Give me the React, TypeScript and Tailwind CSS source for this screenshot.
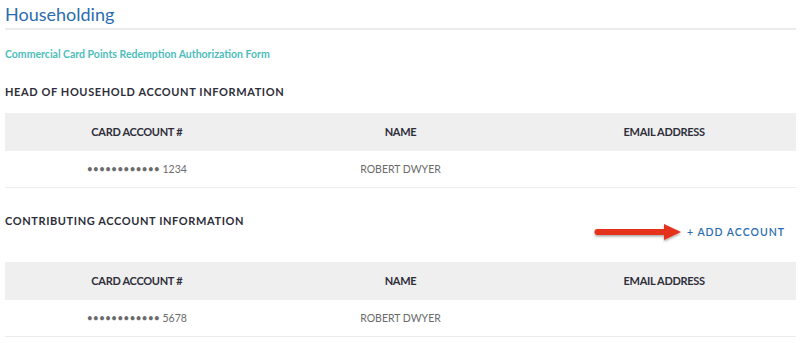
import React from 'react';

type Row = { card: string; name: string; email: string };

const Arrow: React.FC = () => (
  <svg width="92" height="22" viewBox="0 0 92 22" className="block">
    <defs>
      <filter id="sh" x="-10%" y="-40%" width="120%" height="180%">
        <feDropShadow dx="0" dy="1.5" stdDeviation="1.2" floodColor="#000" floodOpacity="0.35" />
      </filter>
    </defs>
    <path
      d="M4.5 7 L71 7 L71 2 L88 10 L71 18 L71 13 L4.5 13 Q1.5 13 1.5 10 Q1.5 7 4.5 7 Z"
      fill="#e5321b"
      filter="url(#sh)"
    />
  </svg>
);

const AccountTable: React.FC<{ rows: Row[] }> = ({ rows }) => (
  <div>
    <div className="grid grid-cols-3 h-[38px] items-center bg-[#efefef] text-[11px] font-bold text-[#2e2e3a] tracking-[-0.3px] text-center">
      <div>CARD ACCOUNT #</div>
      <div>NAME</div>
      <div>EMAIL ADDRESS</div>
    </div>
    {rows.map((r, i) => (
      <div
        key={i}
        className="grid grid-cols-3 h-[37px] items-center pt-[2px] border-b border-[#ececec] text-[10.5px] text-[#6b6b6b] text-center"
      >
        <div>{r.card}</div>
        <div>{r.name}</div>
        <div>{r.email}</div>
      </div>
    ))}
  </div>
);

const App: React.FC = () => {
  return (
    <div className="w-[800px] h-[343px] bg-white overflow-hidden font-['Lato','Liberation_Sans',sans-serif]">
      <div className="pl-[5px] pr-[4px]">
        <h1 className="pt-[3px] h-[28px] text-[18px] leading-[22px] text-[#2b6cb0] font-normal">Householding</h1>
        <div className="h-[2px] bg-[#ececec]" />

        <a className="block mt-[18px] h-[12px] leading-[12px] text-[10.5px] font-bold text-[#4dbdbb]">
          Commercial Card Points Redemption Authorization Form
        </a>

        <h2 className="mt-[24px] h-[16px] leading-[16px] text-[11px] font-bold tracking-[0.6px] text-[#2e2e3a]">
          HEAD OF HOUSEHOLD ACCOUNT INFORMATION
        </h2>

        <div className="mt-[13px]">
          <AccountTable rows={[{ card: '•••••••••••• 1234', name: 'ROBERT DWYER', email: '' }]} />
        </div>

        <div className="relative mt-[25px] h-[49px]">
          <h2 className="h-[16px] leading-[16px] text-[11px] font-bold tracking-[0.6px] text-[#2e2e3a]">
            CONTRIBUTING ACCOUNT INFORMATION
          </h2>
          <div className="absolute right-[11px] top-[9px] flex items-center gap-[2px]">
            <Arrow />
            <span className="text-[10.5px] font-semibold tracking-[1px] text-[#2b6cb0]">+ ADD ACCOUNT</span>
          </div>
        </div>

        <AccountTable rows={[{ card: '•••••••••••• 5678', name: 'ROBERT DWYER', email: '' }]} />
      </div>
    </div>
  );
};

export default App;
